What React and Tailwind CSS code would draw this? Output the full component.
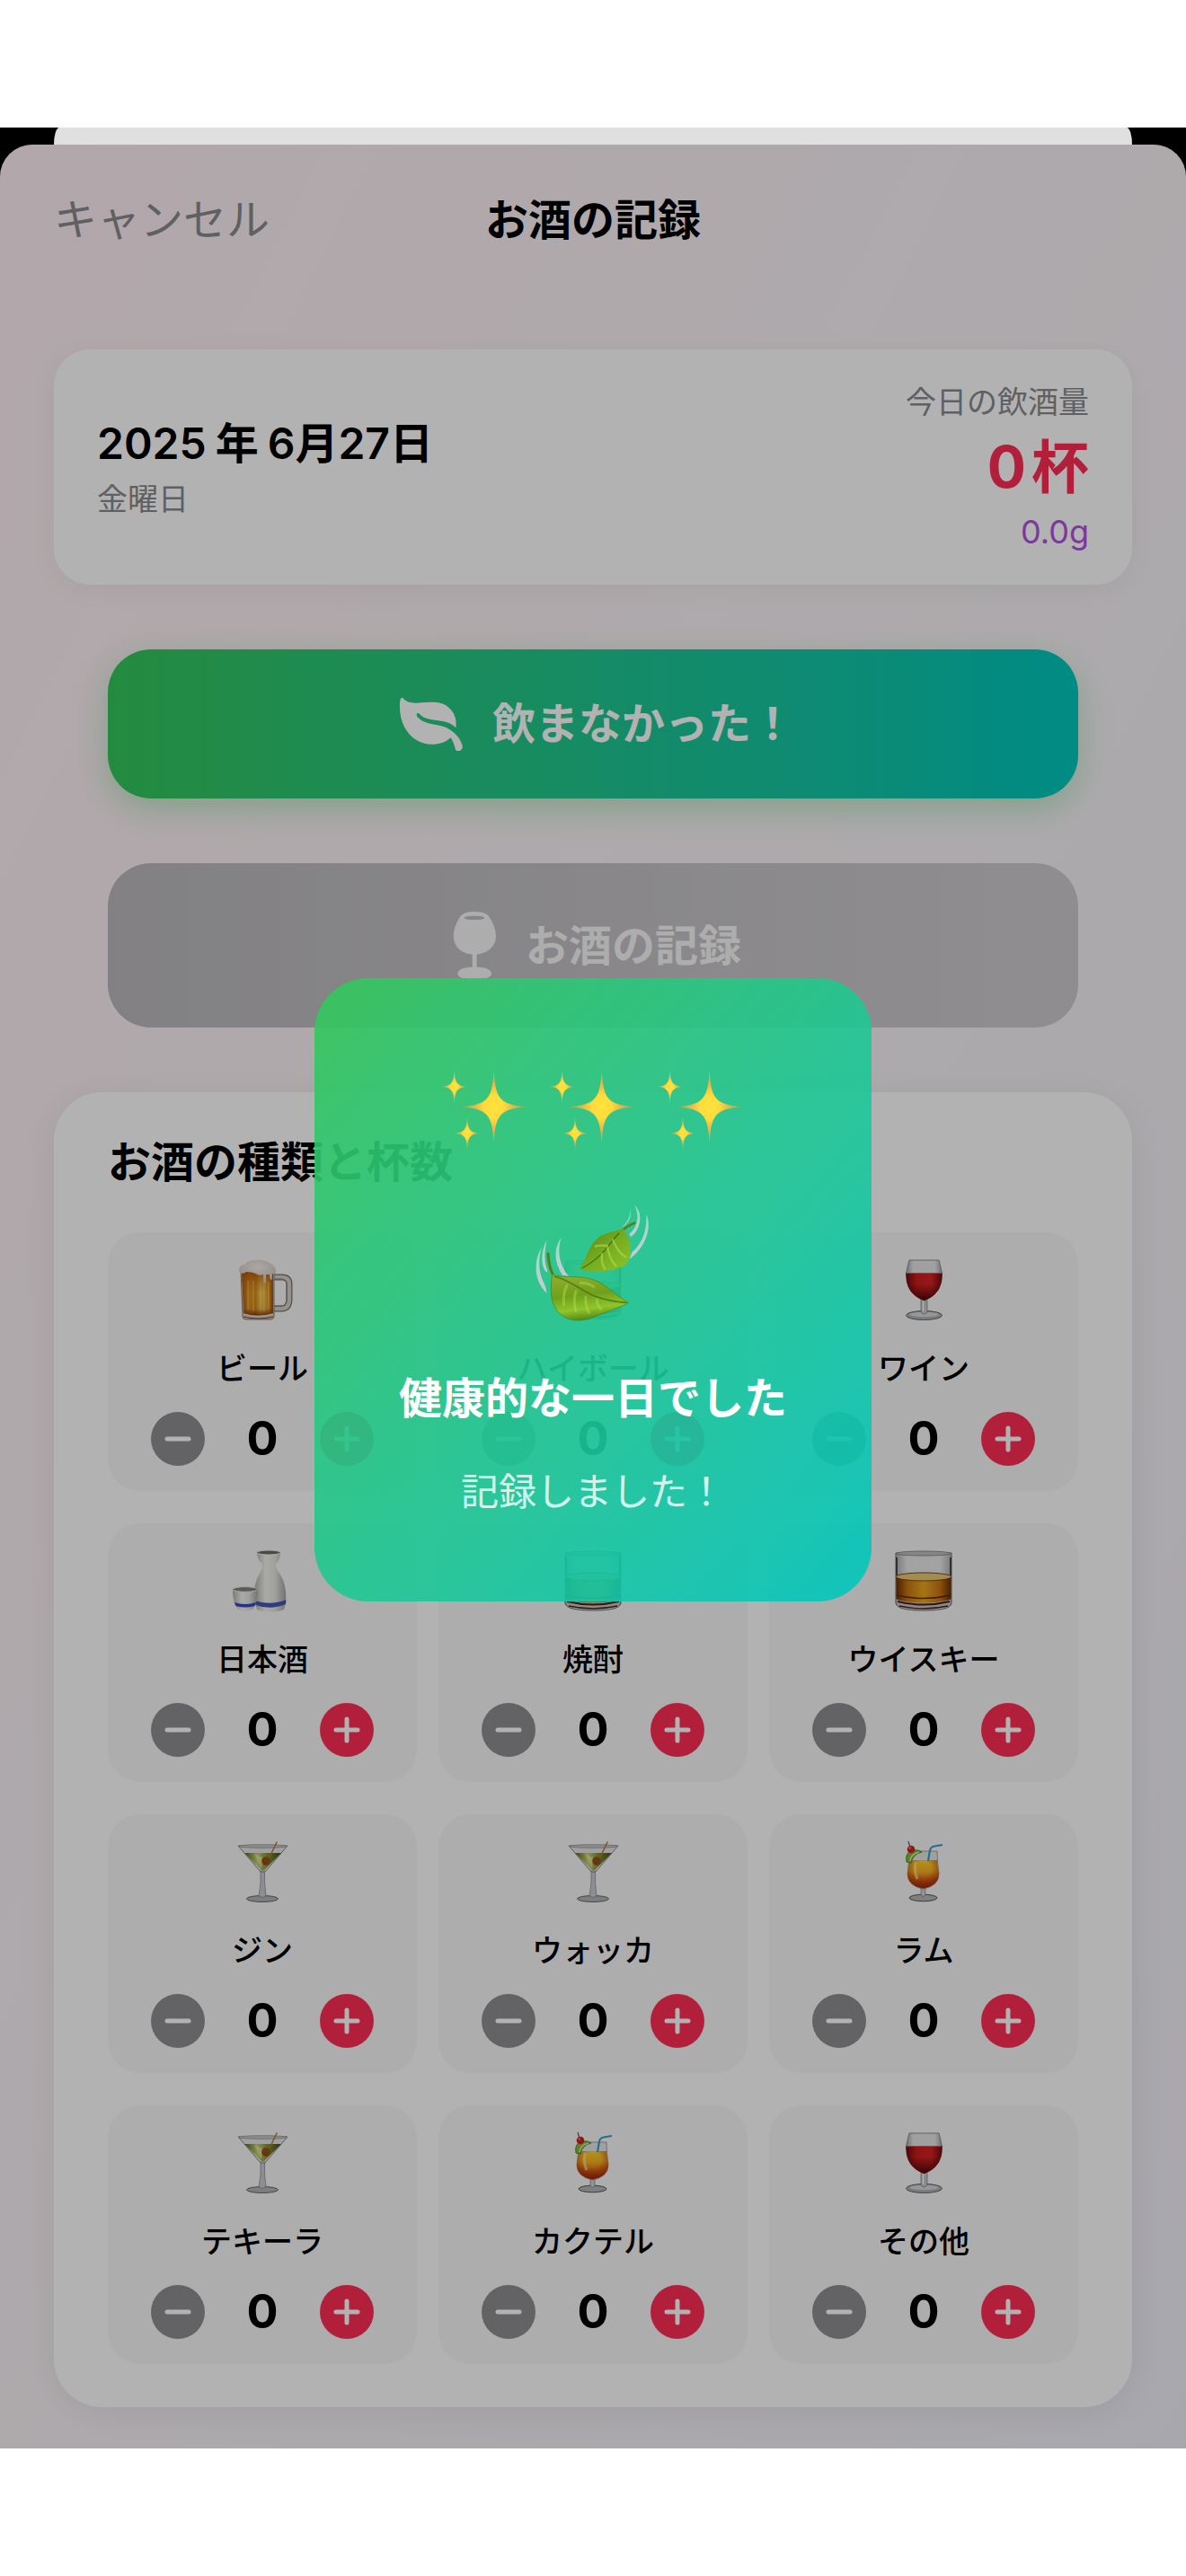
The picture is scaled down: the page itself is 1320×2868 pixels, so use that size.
import React from "react";

function GradientDefs() {
  return (
    <svg width="0" height="0" className="absolute" aria-hidden="true">
      <defs>
        <linearGradient id="beer" x1="0" x2="1" y1="0" y2="0">
          <stop offset="0" stopColor="#a85a10" />
          <stop offset="0.25" stopColor="#e09320" />
          <stop offset="0.45" stopColor="#d98a1c" />
          <stop offset="0.6" stopColor="#f5cf5a" />
          <stop offset="0.85" stopColor="#e0981f" />
          <stop offset="1" stopColor="#9a4c0c" />
        </linearGradient>
        <linearGradient id="beerShade" x1="0" x2="0" y1="0" y2="1">
          <stop offset="0" stopColor="#a8500c" stopOpacity="0.85" />
          <stop offset="0.5" stopColor="#c87818" stopOpacity="0" />
          <stop offset="0.85" stopColor="#8a3c08" stopOpacity="0.1" />
          <stop offset="1" stopColor="#7a3206" stopOpacity="0.9" />
        </linearGradient>
        <radialGradient id="foam" cx="0.5" cy="0.3" r="0.7">
          <stop offset="0" stopColor="#f7f1ec" />
          <stop offset="1" stopColor="#d0c3ba" />
        </radialGradient>
        <linearGradient id="redWine" x1="0" x2="1" y1="0" y2="0">
          <stop offset="0" stopColor="#6e0b10" />
          <stop offset="0.3" stopColor="#cf1d1d" />
          <stop offset="0.7" stopColor="#d82222" />
          <stop offset="1" stopColor="#6e0b10" />
        </linearGradient>
        <linearGradient id="wineShade" x1="0" x2="0" y1="0" y2="1">
          <stop offset="0.4" stopColor="#4a0508" stopOpacity="0" />
          <stop offset="1" stopColor="#3a0305" stopOpacity="0.9" />
        </linearGradient>
        <linearGradient id="glass" x1="0" x2="1" y1="0" y2="0">
          <stop offset="0" stopColor="#6f7173" />
          <stop offset="0.2" stopColor="#dcdddd" />
          <stop offset="0.8" stopColor="#dcdddd" />
          <stop offset="1" stopColor="#6f7173" />
        </linearGradient>
        <linearGradient id="whisky" x1="0" x2="1" y1="0" y2="0">
          <stop offset="0" stopColor="#6a2c05" />
          <stop offset="0.2" stopColor="#c97512" />
          <stop offset="0.5" stopColor="#eba91f" />
          <stop offset="0.8" stopColor="#c97512" />
          <stop offset="1" stopColor="#6a2c05" />
        </linearGradient>
        <linearGradient id="porcelain" x1="0" x2="1" y1="0" y2="0">
          <stop offset="0" stopColor="#aeb0ac" />
          <stop offset="0.35" stopColor="#f3f3ef" />
          <stop offset="0.65" stopColor="#e6e6e2" />
          <stop offset="1" stopColor="#a3a5a2" />
        </linearGradient>
        <linearGradient id="martini" x1="0" x2="1" y1="0" y2="0">
          <stop offset="0" stopColor="#596018" />
          <stop offset="0.35" stopColor="#c8cf72" />
          <stop offset="0.6" stopColor="#8c9630" />
          <stop offset="1" stopColor="#3e4a14" />
        </linearGradient>
        <linearGradient id="sunrise" x1="0" x2="0" y1="0" y2="1">
          <stop offset="0" stopColor="#ffd22e" />
          <stop offset="0.4" stopColor="#f9b021" />
          <stop offset="0.7" stopColor="#e0651a" />
          <stop offset="1" stopColor="#a82810" />
        </linearGradient>
        <radialGradient id="sunriseEdge" cx="0.5" cy="0.3" r="0.65">
          <stop offset="0.4" stopColor="#a83208" stopOpacity="0" />
          <stop offset="1" stopColor="#a02808" stopOpacity="0.75" />
        </radialGradient>
        <radialGradient id="star">
          <stop offset="0" stopColor="#ffe23c" />
          <stop offset="0.3" stopColor="#ffdc3c" />
          <stop offset="0.5" stopColor="#f3bf45" />
          <stop offset="1" stopColor="#c9a040" stopOpacity="0.7" />
        </radialGradient>
        <linearGradient id="leafLow" x1="0.3" x2="0.5" y1="0" y2="1">
          <stop offset="0" stopColor="#8fae2c" />
          <stop offset="0.45" stopColor="#6fa01c" />
          <stop offset="0.75" stopColor="#8fc52c" />
          <stop offset="1" stopColor="#4d8214" />
        </linearGradient>
        <linearGradient id="leafHigh" x1="0" x2="1" y1="0" y2="1">
          <stop offset="0" stopColor="#4d7f16" />
          <stop offset="0.5" stopColor="#76ab20" />
          <stop offset="1" stopColor="#8cc52a" />
        </linearGradient>
        <linearGradient id="breeze" x1="0" x2="0" y1="0" y2="1">
          <stop offset="0" stopColor="#dfe6ea" stopOpacity="0.6" />
          <stop offset="1" stopColor="#c5c8d2" />
        </linearGradient>
      </defs>
    </svg>
  );
}

function Drawing({ title, children }) {
  return (
    <svg viewBox="0 0 72 72" className="size-[72px]" role="img" aria-label={title}>
      {children}
    </svg>
  );
}

function Beer() {
  return (
    <Drawing title="ビール">
      <path d="M48 22 H58 Q66 22 66 30 V46 Q66 57 57 57 H48" fill="none" stroke="#77706a" strokeWidth="7" />
      <path d="M48 22 H58 Q66 22 66 30 V46 Q66 57 57 57 H48" fill="none" stroke="#d5cfc8" strokeWidth="4.5" />
      <path d="M48 24 H57 Q63 24 63 31 V46 Q63 54 57 54 H48" fill="none" stroke="#8d857d" strokeWidth="1" />
      <path d="M12 14 H49 L49 66 Q49 69 44 69 H18 Q14 69 14 66 Z" fill="#d9d2ca" stroke="#7a5a3c" strokeWidth="0.8" />
      <path d="M13 15 H48 V62 Q31 67 15 62 Z" fill="url(#beer)" />
      <path d="M13 15 H48 V62 Q31 67 15 62 Z" fill="url(#beerShade)" />
      <path d="M20 26 V58 M26 26 V60 M38 26 V60 M43 27 V58" stroke="#fbdc8a" strokeOpacity="0.4" strokeWidth="1.5" />
      <path d="M10 15 Q10 8 16 8 Q20 3 28 3 Q40 2 47 8 Q52 12 51 17 Q49 20 47 18 V24 Q45 27 44 22 V19 H40 V28 Q38 31 37 26 V19 Q32 21 29 18 Q24 16 18 16 Q15 19 11 17 Z" fill="url(#foam)" />
      <path d="M15 66 Q31 70 48 66" fill="none" stroke="#6b3c22" strokeWidth="1.2" />
    </Drawing>
  );
}

function Wine() {
  return (
    <Drawing title="ワイン">
      <ellipse cx="36.5" cy="64.5" rx="20" ry="5" fill="#aeb0b2" stroke="#55585a" strokeWidth="0.9" />
      <ellipse cx="36.5" cy="63.5" rx="16" ry="2.8" fill="#d6d8da" />
      <path d="M33 44 H40 V61 Q36.5 65 33 61 Z" fill="#c4c7c9" stroke="#77797b" strokeWidth="0.7" />
      <path d="M35.5 47 V60" stroke="#fff" strokeWidth="1.3" />
      <path d="M20 3 H53 Q55 10 56.5 18 Q57 40 36.5 48 Q16 40 16.5 18 Q18 10 20 3 Z" fill="url(#glass)" fillOpacity="0.65" stroke="#808284" strokeWidth="0.9" />
      <path d="M16.5 17 H56.5 Q58 40 36.5 48 Q15 40 16.5 17 Z" fill="url(#redWine)" />
      <path d="M16.5 17 H56.5 Q58 40 36.5 48 Q15 40 16.5 17 Z" fill="url(#wineShade)" />
      <path d="M17 17.5 H56" stroke="#e26060" strokeWidth="0.9" />
    </Drawing>
  );
}

function Tumbler({ title }) {
  return (
    <Drawing title={title}>
      <path d="M5 5 H67 V61 Q66 69 36 69 Q6 69 5 61 Z" fill="url(#glass)" fillOpacity="0.55" stroke="#6a6b6c" strokeWidth="1" />
      <ellipse cx="36" cy="5.5" rx="30.5" ry="2.5" fill="#bfc0c0" stroke="#77797a" strokeWidth="0.8" />
      <path d="M6 10 V30 M66 10 V30" stroke="#3c3d3e" strokeWidth="1.8" />
      <path d="M5.5 31 H66.5 V56 Q60 61 36 61 Q12 61 5.5 56 Z" fill="url(#whisky)" />
      <ellipse cx="36" cy="31.5" rx="30.5" ry="4.5" fill="#e8c976" stroke="#7c420c" strokeWidth="1" />
      <path d="M6 52 Q36 59 66 52" fill="none" stroke="#5c2404" strokeWidth="1.5" />
      <path d="M6 57 Q36 64 66 57 V61 Q60 68 36 68 Q12 68 6 61 Z" fill="#c9c5c0" />
      <path d="M7 59 Q36 66 65 59" fill="none" stroke="#4b1d10" strokeWidth="2" />
      <path d="M9 64 Q36 70 63 64" fill="none" stroke="#3c2420" strokeWidth="1.3" />
    </Drawing>
  );
}

function Sake() {
  return (
    <Drawing title="日本酒">
      <path d="M30 4 Q30 13 36 17 Q37 21 34 26 Q27 37 27 50 Q27 60 30 68 Q45 74 60 68 Q63 60 62 48 Q61 36 54 26 Q50 21 51 17 Q56 13 56 4 Z" fill="url(#porcelain)" />
      <ellipse cx="43" cy="4.5" rx="13" ry="2.5" fill="#6a6a64" stroke="#f3f3ef" strokeWidth="1" />
      <path d="M27.5 58 Q45 64 62.5 57 L62 62 Q45 69 28.5 63 Z" fill="#4457b5" />
      <path d="M3 45 Q3 60 8 67 Q17 72 26 67 Q31 59 31 45 Z" fill="url(#porcelain)" />
      <ellipse cx="17" cy="45.5" rx="14" ry="2.8" fill="#81827e" stroke="#eeeeea" strokeWidth="1" />
      <path d="M5 60 Q17 64 29 60 L27.5 64 Q17 67 6.5 64 Z" fill="#3449bd" />
    </Drawing>
  );
}

function Martini({ title }) {
  return (
    <Drawing title={title}>
      <ellipse cx="36" cy="66" rx="17.5" ry="3.5" fill="#b2b5b8" stroke="#55585c" strokeWidth="0.9" />
      <path d="M34 34 H38.5 Q38 50 40 63 Q36 66 32 63 Q35 50 34 34 Z" fill="#c9ccd2" stroke="#7a7c84" strokeWidth="0.7" />
      <path d="M9 7 H64 L39 36 H34 Z" fill="#dcdedc" fillOpacity="0.7" stroke="#77797a" strokeWidth="0.9" />
      <path d="M16 15 H57 L39 33 Q36.5 36 34 33 Z" fill="url(#martini)" />
      <path d="M27 16 L35 32 L36 20 Z" fill="#eef0b8" fillOpacity="0.6" />
      <ellipse cx="36.5" cy="7.5" rx="27" ry="1.8" fill="#c8caca" stroke="#888a8b" strokeWidth="0.7" />
      <path d="M52 3 L40 28" stroke="#b9782c" strokeWidth="1.5" strokeLinecap="round" />
      <circle cx="40" cy="24" r="4.8" fill="#84591a" />
      <circle cx="39.5" cy="26" r="1.8" fill="#b33a1c" />
    </Drawing>
  );
}

function Tropical({ title }) {
  return (
    <Drawing title={title}>
      <ellipse cx="35.5" cy="65" rx="15.5" ry="3.8" fill="#b5b7b8" stroke="#4f5254" strokeWidth="1" />
      <path d="M32 52 H39 Q37 56 38 62 Q35.5 65 33 62 Q34 56 32 52 Z" fill="#d1d3d4" stroke="#7b7d7f" strokeWidth="0.8" />
      <path d="M20 13 H51 Q51 24 53 38 Q53 52 35.5 55 Q18 52 18 38 Q20 24 20 13 Z" fill="#dedfde" fillOpacity="0.75" stroke="#8a8c8d" strokeWidth="0.8" />
      <path d="M20 23 H51 L53 38 Q53 51 35.5 54.5 Q18 51 18 38 Z" fill="url(#sunrise)" />
      <path d="M20 23 H51 L53 38 Q53 51 35.5 54.5 Q18 51 18 38 Z" fill="url(#sunriseEdge)" />
      <path d="M27 25 Q25 36 29 44" fill="none" stroke="#fff0a0" strokeOpacity="0.6" strokeWidth="3" />
      <path d="M41 24 L43 12 Q44 8 48 7.5 L57 6" fill="none" stroke="#3c9bd2" strokeWidth="2.2" />
      <path d="M17 25 Q15 14 24 12 Q31 11 34 14 Q24 16 22 26 Z" fill="#86b93a" stroke="#4c8a22" strokeWidth="1" />
      <path d="M21 24 Q22 16 31 14" fill="none" stroke="#dbe9a0" strokeWidth="1.5" />
      <path d="M19 2 L21 9" stroke="#8c4c4c" strokeWidth="1.2" />
      <circle cx="22" cy="11" r="4.3" fill="#cc2020" />
      <circle cx="20.8" cy="9.5" r="1.2" fill="#f08080" />
    </Drawing>
  );
}

function Sparkles() {
  const star = "M0 -100 C4 -24 14 -6 100 0 C14 6 4 24 0 100 C-4 24 -14 6 -100 0 C-14 -6 -4 -24 0 -100 Z";
  return (
    <svg viewBox="0 0 288 288" className="size-24" aria-hidden="true">
      <path d={star} fill="url(#star)" transform="translate(173 142) scale(1.08 1.3)" />
      <path d={star} fill="url(#star)" transform="translate(41 75) scale(0.42 0.62)" />
      <path d={star} fill="url(#star)" transform="translate(84 230) scale(0.42 0.6)" />
    </svg>
  );
}

function FlutteringLeaves() {
  return (
    <svg viewBox="0 0 384 390" className="h-[130px] w-32" aria-hidden="true">
      <g fill="url(#breeze)">
        <path d="M20 143 C-4 185 -10 250 38 297 Q36 280 30 266 C8 225 10 185 20 143 Z" />
        <path d="M38 118 C14 165 20 212 37 226 Q40 228 40 220 C26 185 32 150 38 118 Z" />
        <path d="M86 110 C58 150 64 195 90 236 L111 240 C78 200 72 155 86 110 Z" />
        <path d="M330 2 C364 30 348 90 318 108 L313 98 C340 78 350 40 330 2 Z" />
        <path d="M316 14 C322 40 312 58 296 72 L288 76 C308 58 318 40 316 14 Z" />
        <path d="M370 33 C392 80 362 150 314 182 L322 160 C362 125 372 80 370 33 Z" />
      </g>
      <path d="M330 62 Q308 70 286 90" fill="none" stroke="#567d1a" strokeWidth="8" strokeLinecap="round" />
      <path d="M145 215 C172 192 172 132 222 103 C248 90 275 88 292 80 C325 118 328 190 290 208 C240 230 180 226 145 215 Z" fill="url(#leafHigh)" />
      <path d="M280 95 C250 120 235 170 155 213" fill="none" stroke="#466f12" strokeWidth="4" />
      <path d="M258 118 Q275 160 300 175 M240 140 Q245 180 268 205 M222 165 Q218 195 232 215 M240 138 Q215 135 200 140" fill="none" stroke="#b2dc48" strokeOpacity="0.6" strokeWidth="7" strokeLinecap="round" />
      <path d="M42 164 C44 200 50 225 64 244" fill="none" stroke="#567d1a" strokeWidth="9" strokeLinecap="round" />
      <path d="M56 232 C90 248 130 236 178 247 C232 258 265 305 312 328 C280 345 230 362 190 378 C140 396 96 388 70 352 C45 318 52 268 56 232 Z" fill="url(#leafLow)" stroke="#4f7f18" strokeWidth="2" />
      <path d="M62 240 C110 250 150 285 195 305 Q250 325 305 328" fill="none" stroke="#527c16" strokeWidth="5" />
      <path d="M105 270 Q90 300 95 335 M135 290 Q125 320 135 355 M168 308 Q165 335 178 362 M205 318 Q205 335 218 350 M150 262 Q175 262 195 275" fill="none" stroke="#bfe04c" strokeOpacity="0.4" strokeWidth="9" strokeLinecap="round" />
    </svg>
  );
}

function LeafIcon() {
  return (
    <svg viewBox="0 0 216 180" className="h-[60px] w-[72px]" fill="currentColor" aria-hidden="true">
      <path d="M14 4 C26 21 50 21 75 19 C115 16 140 16 160 30 C185 48 194 74 190 103 C175 85 150 80 120 77 C95 74 80 70 70 58 C64 50 54 56 62 67 C80 88 110 90 135 95 C172 102 202 128 212 163 C215 182 193 184 189 176 C185 160 180 146 173 136 C140 166 90 163 60 145 C20 120 0 75 3 20 C3 6 8 -2 14 4 Z" />
    </svg>
  );
}

function GlassIcon() {
  return (
    <svg viewBox="0 0 150 231" className="h-[77px] w-[50px]" fill="currentColor" aria-hidden="true">
      <path
        fillRule="evenodd"
        d="M75 3 C100 3 117 9 123 19 C139 42 147 65 147 85 C147 118 120 143 83 146 V188 C112 188 132 196 132 210 C132 222 112 229 76 229 C40 229 19 222 19 210 C19 196 40 188 68 188 V146 C31 143 5 118 5 85 C5 65 13 42 28 19 C34 9 50 3 75 3 Z M75 17 C55 17 41 19 41 23 C41 28 55 30 75 30 C95 30 109 28 109 23 C109 19 95 17 75 17 Z"
      />
    </svg>
  );
}

const drinks = [
  { name: "ビール", icon: <Beer /> },
  { name: "ハイボール", icon: <Tumbler title="ハイボール" /> },
  { name: "ワイン", icon: <Wine /> },
  { name: "日本酒", icon: <Sake /> },
  { name: "焼酎", icon: <Tumbler title="焼酎" /> },
  { name: "ウイスキー", icon: <Tumbler title="ウイスキー" /> },
  { name: "ジン", icon: <Martini title="ジン" /> },
  { name: "ウォッカ", icon: <Martini title="ウォッカ" /> },
  { name: "ラム", icon: <Tropical title="ラム" /> },
  { name: "テキーラ", icon: <Martini title="テキーラ" /> },
  { name: "カクテル", icon: <Tropical title="カクテル" /> },
  { name: "その他", icon: <Wine /> },
];

function StepButton({ label, color, children }) {
  return (
    <button type="button" aria-label={label} className={"size-[60px] rounded-full text-white " + color}>
      <svg viewBox="0 0 60 60" className="size-[60px]" stroke="currentColor" strokeWidth="5" strokeLinecap="round" aria-hidden="true">
        {children}
      </svg>
    </button>
  );
}

function DrinkTile({ name, icon }) {
  return (
    <li className="flex flex-col items-center rounded-[36px] bg-[#f8f8f8] py-7">
      {icon}
      <span className="mt-7 text-[34px] leading-[48px] font-medium">{name}</span>
      <div className="mt-6 flex w-full items-center justify-between px-12">
        <StepButton label={name + "を減らす"} color="bg-[#8e8e93]">
          <path d="M18 30 H42" />
        </StepButton>
        <span className="text-[52px] leading-[60px] font-bold">0</span>
        <StepButton label={name + "を増やす"} color="bg-[#ff2d55]">
          <path d="M18 30 H42 M30 18 V42" />
        </StepButton>
      </div>
    </li>
  );
}

export default function App() {
  return (
    <div className="bg-white py-[142px] font-['Inter','Noto_Sans_CJK_JP',sans-serif] text-black" lang="ja">
      <GradientDefs />
      <div className="bg-black">
        <div className="mx-[60px] h-[19px] rounded-t-[6px_19px] bg-[#e0e0e0]" />
        <div className="relative overflow-hidden rounded-t-[36px] bg-linear-to-br from-[#fff0f4] via-[#f9f4f7] to-[#f1f0f8]">
          <header className="grid grid-cols-3 items-center px-[60px] py-[54px] text-5xl leading-[60px]">
            <button type="button" className="justify-self-start whitespace-nowrap text-[#8a8a8e]">
              キャンセル
            </button>
            <h1 className="justify-self-center whitespace-nowrap font-bold">お酒の記録</h1>
          </header>

          <main className="flex flex-col gap-[72px] px-[60px] pt-[60px] pb-[46px]">
            <section className="flex items-center justify-between rounded-[40px] bg-white px-12 py-[35px] shadow-[0_6px_30px_rgba(0,0,0,0.05)]">
              <div className="pt-1">
                <p className="text-5xl leading-[60px] font-semibold">
                  2025<span className="mx-2.5">年</span>6月27日
                </p>
                <p className="mt-2 text-[34px] leading-[48px] text-[#8a8a8e]">金曜日</p>
              </div>
              <div className="text-right">
                <p className="text-[34px] leading-[48px] text-[#8a8a8e]">今日の飲酒量</p>
                <p className="text-[64px] leading-[96px] font-bold text-[#ff2d55]">
                  0<span className="ml-1.5">杯</span>
                </p>
                <p className="text-[36px] leading-[48px] text-[#af52de]">0.0g</p>
              </div>
            </section>

            <button
              type="button"
              className="mx-[60px] flex items-center justify-center gap-8 rounded-[48px] bg-linear-to-r from-[#34c759] to-[#00c7be] py-[53px] pl-2 text-5xl leading-[60px] font-bold text-white shadow-[0_12px_36px_rgba(52,199,89,0.3)]"
            >
              <LeafIcon />
              飲まなかった！
            </button>

            <button
              type="button"
              className="mx-[60px] flex items-center justify-center gap-8 rounded-[48px] bg-linear-to-r from-[#bab8bb] to-[#cecbce] py-[53px] pl-2 text-5xl leading-[60px] font-bold text-[#f8f8f8]"
            >
              <GlassIcon />
              お酒の記録
            </button>

            <section className="rounded-[54px] bg-white px-[60px] py-12 shadow-[0_6px_40px_rgba(0,0,0,0.07)]">
              <h2 className="text-5xl leading-[60px] font-bold">お酒の種類と杯数</h2>
              <ul className="mt-12 grid grid-cols-3 gap-x-6 gap-y-9">
                {drinks.map((drink) => (
                  <DrinkTile key={drink.name} name={drink.name} icon={drink.icon} />
                ))}
              </ul>
            </section>
          </main>

          <div className="absolute inset-0 flex items-center justify-center bg-black/30 pb-4">
            <div
              role="dialog"
              aria-labelledby="done-title"
              className="flex w-[620px] flex-col items-center rounded-[60px] bg-linear-to-br from-[#34c759]/90 to-[#00c7be]/90 py-24 text-white"
            >
              <div className="flex gap-6">
                <Sparkles />
                <Sparkles />
                <Sparkles />
              </div>
              <div className="mt-[60px]">
                <FlutteringLeaves />
              </div>
              <p id="done-title" className="mt-14 text-5xl leading-[60px] font-bold">
                健康的な一日でした
              </p>
              <p className="mt-12 text-[42px] leading-[52px] text-white/80">記録しました！</p>
            </div>
          </div>
        </div>
      </div>
    </div>
  );
}
